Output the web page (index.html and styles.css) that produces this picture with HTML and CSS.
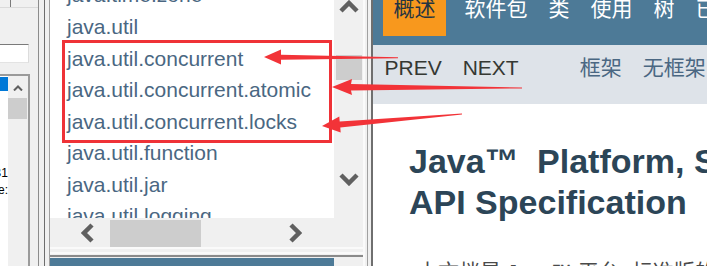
FILE: index.html
```html
<!DOCTYPE html>
<html lang="zh-CN">
<head>
  <meta charset="UTF-8">
  <title>Java Platform SE 8 - 概述</title>
  <link rel="stylesheet" href="styles.css">
</head>
<body>
  <!-- dialog strip on the far left -->
  <div class="dlg">
    <div class="dlg-top"><div class="dlg-tick"></div></div>
    <div class="dlg-body">
      <div class="dlg-input"></div>
      <div class="lb">
        <div class="lb-list">
          <div class="lb-sel"></div>
          <div class="lb-lines">
            <div class="lb-line">AB1</div>
            <div class="lb-line">de:</div>
          </div>
        </div>
        <div class="lb-scroll">
          <svg class="lb-arrow" width="10" height="6" viewBox="0 0 10 6"><path d="M1 5.5 L5 1.5 L9 5.5" /></svg>
          <div class="lb-thumb"></div>
        </div>
      </div>
    </div>
  </div>
  <div class="sep"></div>

  <!-- package list frame -->
  <div class="pkg-frame">
    <div class="pkg-main">
      <div class="pkg-list">
        <ul>
          <li>java.time.zone</li>
          <li>java.util</li>
          <li>java.util.concurrent</li>
          <li>java.util.concurrent.atomic</li>
          <li>java.util.concurrent.locks</li>
          <li>java.util.function</li>
          <li>java.util.jar</li>
          <li>java.util.logging</li>
        </ul>
      </div>
      <div class="vscroll">
        <svg class="arr-up" width="20" height="13" viewBox="0 0 20 13"><path d="M2 11 L10 3 L18 11" /></svg>
        <div class="vthumb"></div>
        <svg class="arr-down" width="20" height="13" viewBox="0 0 20 13"><path d="M2 2 L10 10 L18 2" /></svg>
      </div>
    </div>
    <div class="hscroll">
      <svg class="arr-left" width="13" height="20" viewBox="0 0 13 20"><path d="M11 2 L3 10 L11 18" /></svg>
      <div class="hthumb"></div>
      <svg class="arr-right" width="13" height="20" viewBox="0 0 13 20"><path d="M2 2 L10 10 L2 18" /></svg>
    </div>
    <div class="pane-foot">
      <div class="rule-light"></div>
      <div class="rule-dark"></div>
    </div>
    <div class="pane-next">
      <div class="pane-next-bar"></div>
    </div>
  </div>
  <div class="divider"></div>

  <!-- overview frame -->
  <div class="doc">
    <div class="topnav">
      <div class="nav-item current">概述</div>
      <div class="nav-item">软件包</div>
      <div class="nav-item">类</div>
      <div class="nav-item">使用</div>
      <div class="nav-item">树</div>
      <div class="nav-item">已过时</div>
      <div class="nav-item">索引</div>
      <div class="nav-item">帮助</div>
    </div>
    <div class="subnav">
      <div class="sub-item">PREV</div>
      <div class="sub-item">NEXT</div>
      <div class="sub-item link first-link">框架</div>
      <div class="sub-item link">无框架</div>
      <div class="sub-item link">所有类</div>
    </div>
    <div class="doc-body">
      <h1 class="title">Java<span class="tm">™</span> Platform, Standard Edition 8<br>API Specification</h1>
      <p class="intro">本文档是 Java™ 平台, 标准版的 API 规范。</p>
    </div>
  </div>

  <!-- red annotation -->
  <div class="note-box"></div>
  <svg class="note-arrows" width="707" height="266" viewBox="0 0 707 266">
    <polygon points="264,57 281,49.5 281,54.8 398,57.3 398,58.3 281,59.8 281,64.5" />
    <polygon points="332,87 352,79 351,84 522,87.6 522,88.4 351,90.5 352,95" />
    <polygon points="322,126 339.3,116.5 339.7,121.5 462,113.5 462,114.5 340.3,127.5 340.7,132.5" />
  </svg>
</body>
</html>
```

FILE: styles.css
```css
body {
  margin: 0;
  width: 707px;
  height: 266px;
  overflow: hidden;
  position: relative;
  display: flex;
  background: #f0f0f0;
  font-family: "Liberation Sans", Arial, "Noto Sans CJK SC", sans-serif;
}

/* left dialog strip */
.dlg {
  width: 38px;
  flex-shrink: 0;
  display: flex;
  flex-direction: column;
  border-right: 1px solid #8c8c8c;
}
.dlg-top {
  height: 7px;
}
.dlg-tick {
  width: 10px;
  height: 100%;
  border-right: 1px solid #7a7a7a;
}
.dlg-body {
  flex: 1;
  display: flex;
  flex-direction: column;
  border-top: 1px solid #dadada;
  padding-top: 36px;
  min-height: 0;
}
.dlg-input {
  width: 29px;
  height: 19px;
  box-sizing: border-box;
  background: #fff;
  border-top: 1px solid #7a7a7a;
  border-right: 1px solid #dcdcdc;
  border-bottom: 1px solid #e3e3e3;
}
.lb {
  flex: 1;
  width: 30px;
  margin-top: 11px;
  box-sizing: border-box;
  display: flex;
  border-top: 2px solid #9a9a9a;
  border-right: 2px solid #9a9a9a;
}
.lb-list {
  width: 8px;
  background: #fff;
  overflow: hidden;
}
.lb-sel {
  height: 14px;
  margin-top: 1px;
  background: #0078d7;
}
.lb-lines {
  margin-top: 74px;
}
.lb-line {
  display: flex;
  justify-content: flex-end;
  white-space: nowrap;
  font-size: 12px;
  line-height: 17px;
  color: #000;
}
.lb-scroll {
  width: 20px;
  display: flex;
  flex-direction: column;
  align-items: center;
}
.lb-arrow {
  margin-top: 9px;
  fill: none;
  stroke: #606060;
  stroke-width: 2;
}
.lb-thumb {
  align-self: flex-start;
  width: 19px;
  height: 21px;
  margin-top: 7px;
  background: #cdcdcd;
}
.sep {
  width: 4px;
  flex-shrink: 0;
  margin-left: 5px;
  border-left: 1px solid #6d6d6d;
  border-right: 1px solid #a0a0a0;
}

/* package list frame */
.pkg-frame {
  width: 313px;
  flex-shrink: 0;
  display: flex;
  flex-direction: column;
}
.pkg-main {
  height: 218px;
  display: flex;
}
.pkg-list {
  flex: 1;
  background: #fff;
  overflow: hidden;
}
.pkg-list ul {
  list-style: none;
  margin: -20.7px 0 0;
  padding-left: 17px;
}
.pkg-list li {
  font-size: 21px;
  line-height: 31.6px;
  color: #4a6782;
  white-space: nowrap;
}
.vscroll {
  width: 29px;
  display: flex;
  flex-direction: column;
  align-items: center;
}
.vscroll svg,
.hscroll svg {
  flex-shrink: 0;
  fill: none;
  stroke: #606060;
  stroke-width: 4.5;
}
.vthumb {
  width: 26px;
  height: 25px;
  margin-top: 42px;
  background: #cdcdcd;
}
.arr-down {
  margin-top: 93px;
}
.hscroll {
  height: 29px;
  display: flex;
  align-items: center;
}
.arr-left {
  margin-left: 31px;
}
.hthumb {
  align-self: flex-end;
  width: 91px;
  height: 27px;
  margin-left: 16px;
  background: #cdcdcd;
}
.arr-right {
  margin-left: 88px;
}
.pane-foot {
  height: 11px;
  box-sizing: border-box;
  border-top: 2px solid #fafafa;
  padding-top: 3px;
}
.rule-light {
  height: 2px;
  background: #fafafa;
}
.rule-dark {
  height: 2px;
  margin-top: 1px;
  background: #8a8a8a;
}
.pane-next {
  flex: 1;
  display: flex;
}
.pane-next-bar {
  width: 284px;
  background: #4d7a97;
}
.divider {
  width: 10px;
  flex-shrink: 0;
  box-sizing: border-box;
  border-left: 2px solid #fafafa;
  border-right: 2px solid #6f6f6f;
  background: linear-gradient(to right, #f0f0f0 2px, #a0a0a0 2px, #a0a0a0 3px, #f0f0f0 3px);
}

/* overview frame */
.doc {
  width: 335px;
  flex-shrink: 0;
  overflow: hidden;
  background: #fff;
  display: flex;
  flex-direction: column;
}
.topnav {
  height: 45px;
  flex-shrink: 0;
  display: flex;
  align-items: flex-start;
  padding-left: 10px;
  background: #4d7a97;
  white-space: nowrap;
}
.nav-item {
  flex-shrink: 0;
  font-family: "Noto Sans CJK SC", sans-serif;
  font-size: 21px;
  line-height: 15px;
  padding: 0 10.5px 21px;
  color: #fff;
}
.nav-item.current {
  margin-right: 8px;
  background: #f8981d;
  color: #253441;
}
.subnav {
  height: 59px;
  flex-shrink: 0;
  box-sizing: border-box;
  display: flex;
  align-items: baseline;
  padding: 9px 0 0 1px;
  background: #dee3e9;
  white-space: nowrap;
}
.sub-item {
  flex-shrink: 0;
  font-size: 21px;
  line-height: 24px;
  padding: 0 10.5px;
  color: #353833;
}
.sub-item.link {
  font-family: "Noto Sans CJK SC", sans-serif;
  color: #4a6782;
}
.first-link {
  margin-left: 40px;
}
.doc-body {
  padding: 36.5px 0 0 36px;
  white-space: nowrap;
}
.title {
  margin: 0;
  font-size: 34px;
  font-weight: bold;
  line-height: 41.5px;
  color: #2c4557;
}
.title .tm {
  margin-right: 9px;
}
.intro {
  margin: 33.5px 0 0 8px;
  font-size: 21px;
  line-height: 30px;
  color: #4a4a4a;
}

/* annotation on top */
.note-box {
  position: absolute;
  left: 62px;
  top: 40px;
  width: 270px;
  height: 103px;
  box-sizing: border-box;
  border: 3px solid #ef3237;
}
.note-arrows {
  position: absolute;
  left: 0;
  top: 0;
  fill: #f23338;
}
```
